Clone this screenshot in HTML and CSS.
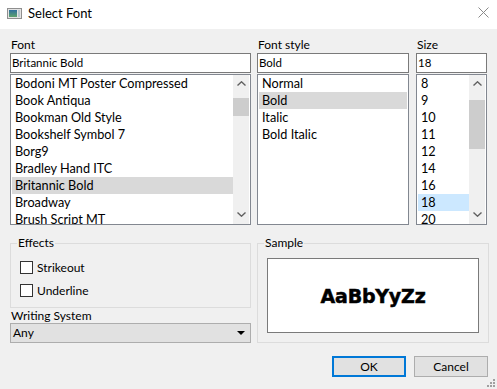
FILE: index.html
```html
<!DOCTYPE html>
<html lang="en">
<head>
  <meta charset="UTF-8">
  <title>Select Font</title>
  <link rel="stylesheet" href="styles.css">
</head>
<body>

  <div class="window">
    <div class="titlebar">
      <svg class="app-icon" width="15" height="11" viewBox="0 0 15 11">
        <defs>
          <linearGradient id="ic" x1="0" y1="0" x2="0" y2="1">
            <stop offset="0" stop-color="#2f6f9f"/>
            <stop offset="1" stop-color="#5ea36c"/>
          </linearGradient>
        </defs>
        <rect x="0.5" y="0.5" width="14" height="10" fill="#e4e4e4" stroke="#8f8f8f"/>
        <rect x="2" y="2" width="8" height="7" fill="url(#ic)"/>
        <rect x="11" y="2" width="2" height="7" fill="#b9c7cf"/>
      </svg>
      <span class="title">Select Font</span>
      <svg class="close" width="11" height="11" viewBox="0 0 11 11">
        <path d="M0.5 0.5 L10.5 10.5 M10.5 0.5 L0.5 10.5" stroke="#8a8a8a" stroke-width="1"/>
      </svg>
    </div>

    <div class="dialog">
      <div class="pickers">
        <div class="picker">
          <div class="caption">Font</div>
          <div class="edit">Britannic Bold</div>
          <div class="list">
            <ul class="items">
              <li>Bodoni MT Poster Compressed</li>
              <li>Book Antiqua</li>
              <li>Bookman Old Style</li>
              <li>Bookshelf Symbol 7</li>
              <li>Borg9</li>
              <li>Bradley Hand ITC</li>
              <li class="current">Britannic Bold</li>
              <li>Broadway</li>
              <li>Brush Script MT</li>
            </ul>
            <div class="scrollbar">
              <svg class="arrow" width="9" height="5" viewBox="0 0 9 5"><polyline points="0.5,4.5 4.5,0.8 8.5,4.5" fill="none" stroke="#606060" stroke-width="1.4"/></svg>
              <span class="thumb font-thumb"></span>
              <svg class="arrow down" width="9" height="5" viewBox="0 0 9 5"><polyline points="0.5,0.5 4.5,4.2 8.5,0.5" fill="none" stroke="#606060" stroke-width="1.4"/></svg>
            </div>
          </div>
        </div>

        <div class="picker">
          <div class="caption">Font style</div>
          <div class="edit">Bold</div>
          <div class="list">
            <ul class="items">
              <li>Normal</li>
              <li class="current">Bold</li>
              <li>Italic</li>
              <li>Bold Italic</li>
            </ul>
          </div>
        </div>

        <div class="picker">
          <div class="caption">Size</div>
          <div class="edit">18</div>
          <div class="list">
            <ul class="items">
              <li>8</li>
              <li>9</li>
              <li>10</li>
              <li>11</li>
              <li>12</li>
              <li>14</li>
              <li>16</li>
              <li class="selected">18</li>
              <li>20</li>
            </ul>
            <div class="scrollbar">
              <svg class="arrow" width="9" height="5" viewBox="0 0 9 5"><polyline points="0.5,4.5 4.5,0.8 8.5,4.5" fill="none" stroke="#606060" stroke-width="1.4"/></svg>
              <span class="thumb size-thumb"></span>
              <svg class="arrow down" width="9" height="5" viewBox="0 0 9 5"><polyline points="0.5,0.5 4.5,4.2 8.5,0.5" fill="none" stroke="#606060" stroke-width="1.4"/></svg>
            </div>
          </div>
        </div>
      </div>

      <div class="lower">
        <div class="left-col">
          <fieldset class="group effects">
            <legend>Effects</legend>
            <div class="check"><span class="box"></span>Strikeout</div>
            <div class="check"><span class="box"></span>Underline</div>
          </fieldset>
          <div class="caption ws">Writing System</div>
          <div class="combo">
            <span>Any</span>
            <svg width="8" height="4" viewBox="0 0 8 4"><polygon points="0,0 8,0 4,4" fill="#000"/></svg>
          </div>
        </div>

        <fieldset class="group sample">
          <legend>Sample</legend>
          <div class="preview">AaBbYyZz</div>
        </fieldset>
      </div>

      <div class="buttons">
        <button class="btn default">OK</button>
        <button class="btn">Cancel</button>
      </div>
    </div>

    <svg class="grip" width="8" height="8" viewBox="0 0 8 8">
      <g fill="#a0a0a0">
        <rect x="6" y="0" width="2" height="2"/>
        <rect x="3" y="3" width="2" height="2"/>
        <rect x="6" y="3" width="2" height="2"/>
        <rect x="0" y="6" width="2" height="2"/>
        <rect x="3" y="6" width="2" height="2"/>
        <rect x="6" y="6" width="2" height="2"/>
      </g>
    </svg>
  </div>

</body>
</html>
```

FILE: styles.css
```css
body {
  margin: 0;
  background: #f0f0f0;
  font-family: Lato, "Noto Sans", sans-serif;
  color: #000;
}
.window {
  position: relative;
  width: 497px;
  height: 389px;
  background: #f0f0f0;
  overflow: hidden;
}
.titlebar {
  height: 29px;
  background: #fff;
  display: flex;
  align-items: center;
  padding-left: 7px;
  box-sizing: border-box;
}
.titlebar .title {
  margin-left: 6px;
  font-size: 13px;
  line-height: 16px;
  margin-top: -3px;
}
.titlebar .app-icon {
  margin-top: -3px;
}
.titlebar .close {
  margin-left: auto;
  margin-right: 8px;
  margin-top: -5px;
}
.dialog {
  padding: 8px 9px 0 10px;
}
.caption {
  font-size: 12px;
  line-height: 16px;
  padding-left: 1px;
}
.pickers {
  display: grid;
  grid-template-columns: 241px 152px 72px;
  column-gap: 6px;
}
.pickers .picker:last-child {
  margin-left: 1px;
}
.edit {
  height: 20px;
  box-sizing: border-box;
  border: 1px solid #7a7a7a;
  background: #fff;
  font-size: 11.5px;
  line-height: 18px;
  padding-left: 1px;
}
.list {
  margin-top: 1px;
  height: 151px;
  box-sizing: border-box;
  border: 1px solid #828790;
  background: #fff;
  padding: 0 1px;
  display: flex;
  overflow: hidden;
}
.items {
  list-style: none;
  margin: 0;
  padding: 0;
  flex: 1;
}
.items li {
  height: 17px;
  line-height: 17px;
  font-size: 12.7px;
  padding-left: 3px;
  white-space: nowrap;
}
.items li.current {
  background: #d9d9d9;
}
.items li.selected {
  background: #cce8ff;
}
.scrollbar {
  width: 16px;
  background: #f0f0f0;
  display: flex;
  flex-direction: column;
  align-items: center;
}
.scrollbar .arrow {
  margin-top: 6px;
  margin-bottom: 6px;
}
.scrollbar .arrow.down {
  margin-top: auto;
  margin-bottom: 7px;
}
.thumb {
  width: 16px;
  background: #cdcdcd;
}
.font-thumb {
  margin-top: 6px;
  height: 18px;
}
.size-thumb {
  margin-top: 8px;
  height: 49px;
}
.lower {
  display: grid;
  grid-template-columns: 241px 232px;
  column-gap: 6px;
  margin-top: 11px;
}
.group {
  margin: 0;
  border: 1px solid #dcdcdc;
  padding: 6px 9px 5px 9px;
  min-width: 0;
}
.group legend {
  font-size: 12px;
  line-height: 14px;
  padding: 0 1px;
  margin-left: -3px;
}
.check {
  display: flex;
  align-items: center;
  height: 23px;
  font-size: 12px;
}
.check .box {
  width: 13px;
  height: 13px;
  box-sizing: border-box;
  border: 1px solid #333;
  background: #fff;
  margin-right: 4px;
}
.caption.ws {
  line-height: 15px;
}
.combo {
  height: 20px;
  box-sizing: border-box;
  border: 1px solid #adadad;
  background: #e1e1e1;
  font-size: 12px;
  line-height: 18px;
  padding: 0 5px 0 2px;
  display: flex;
  align-items: center;
  justify-content: space-between;
}
.sample {
  padding-bottom: 8px;
}
.preview {
  height: 75px;
  box-sizing: border-box;
  border: 1px solid #7a7a7a;
  background: #fff;
  display: flex;
  align-items: center;
  justify-content: center;
  font-family: "DejaVu Sans", sans-serif;
  font-weight: 700;
  font-size: 19px;
  letter-spacing: -0.2px;
  -webkit-text-stroke: 0.5px #000;
  margin-top: 2px;
}
.buttons {
  display: flex;
  justify-content: flex-end;
  gap: 8px;
  margin-top: 13px;
}
.btn {
  width: 74px;
  height: 21px;
  box-sizing: border-box;
  border: 1px solid #adadad;
  background: #e1e1e1;
  font-family: Lato, "Noto Sans", sans-serif;
  font-size: 12px;
  padding: 0;
  color: #000;
}
.btn.default {
  border: 2px solid #0078d7;
}
.grip {
  position: absolute;
  right: 2px;
  bottom: 2px;
}
```
